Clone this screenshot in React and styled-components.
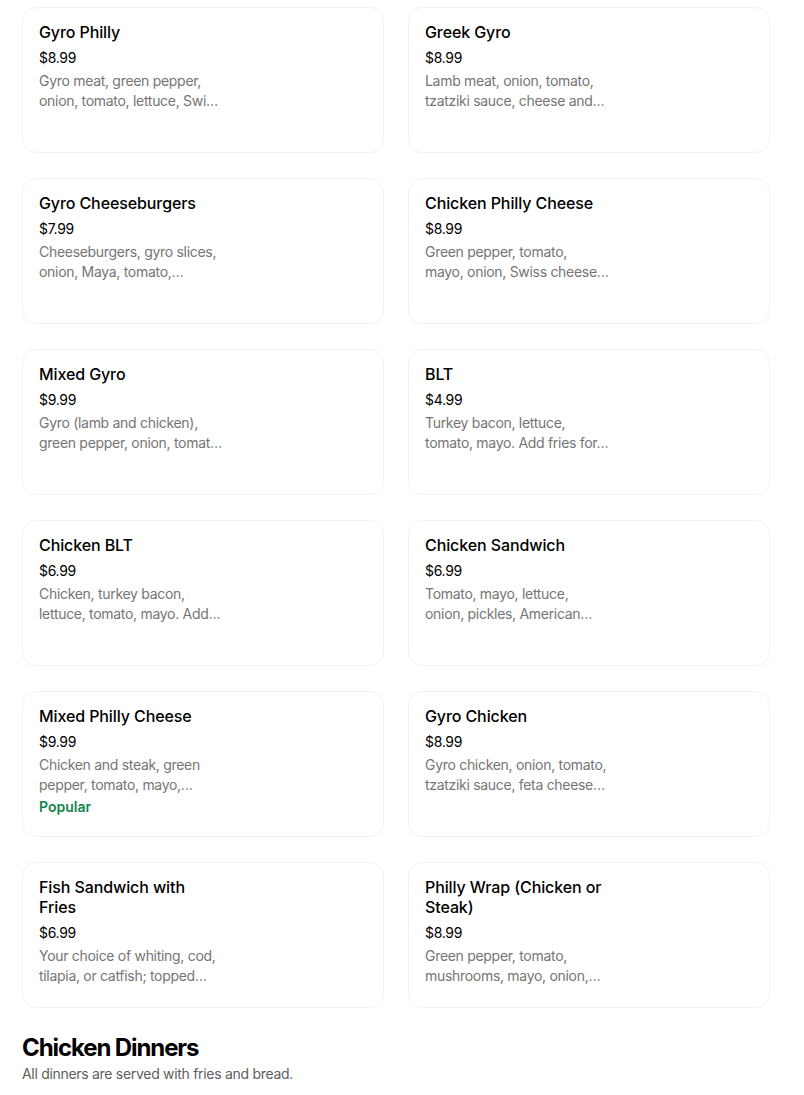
import React from "react";
import styled, { createGlobalStyle } from "styled-components";

const Global = createGlobalStyle`
  html, body { margin: 0; padding: 0; background: #fff; }
  body { font-family: Inter, "Noto Sans", Arial, sans-serif; color: #000; -webkit-font-smoothing: antialiased; }
`;

const Page = styled.div`
  padding: 7px 0 0 22px;
`;

const Grid = styled.div`
  display: grid;
  grid-template-columns: 362px 362px;
  column-gap: 24px;
  row-gap: 25px;
`;

const Card = styled.div`
  box-sizing: border-box;
  height: 146px;
  border: 1px solid #f2f2f2;
  border-radius: 14px;
  padding: 14px 16px 0 16px;
  background: #fff;
`;

const Info = styled.div`
  width: 184px;
  display: flex;
  flex-direction: column;
`;

const Title = styled.div`
  font-size: 16px;
  line-height: 20px;
  font-weight: 500;
  letter-spacing: -0.1px;
  color: #000;
`;

const Price = styled.div`
  margin-top: 6px;
  font-size: 14px;
  line-height: 20px;
  letter-spacing: -0.3px;
  color: #000;
`;

const Desc = styled.div`
  margin-top: 3px;
  font-size: 14px;
  line-height: 20px;
  letter-spacing: -0.3px;
  color: #757575;
  white-space: pre;
`;

const Badge = styled.div`
  margin-top: 2px;
  font-size: 14px;
  line-height: 20px;
  font-weight: 600;
  color: #16844a;
`;

const Section = styled.section`
  margin-top: 24px;
`;

const Heading = styled.h2`
  margin: 0;
  font-size: 24px;
  line-height: 32px;
  font-weight: 700;
  letter-spacing: -1.1px;
`;

const Sub = styled.p`
  margin: 0;
  font-size: 14px;
  line-height: 20px;
  color: #5e5e5e;
  letter-spacing: -0.3px;
`;

const items = [
  { t: "Gyro Philly", p: "$8.99", d: ["Gyro meat, green pepper,", "onion, tomato, lettuce, Swi…"] },
  { t: "Greek Gyro", p: "$8.99", d: ["Lamb meat, onion, tomato,", "tzatziki sauce, cheese and…"] },
  { t: "Gyro Cheeseburgers", p: "$7.99", d: ["Cheeseburgers, gyro slices,", "onion, Maya, tomato,…"] },
  { t: "Chicken Philly Cheese", p: "$8.99", d: ["Green pepper, tomato,", "mayo, onion, Swiss cheese…"] },
  { t: "Mixed Gyro", p: "$9.99", d: ["Gyro (lamb and chicken),", "green pepper, onion, tomat…"] },
  { t: "BLT", p: "$4.99", d: ["Turkey bacon, lettuce,", "tomato, mayo. Add fries for…"] },
  { t: "Chicken BLT", p: "$6.99", d: ["Chicken, turkey bacon,", "lettuce, tomato, mayo. Add…"] },
  { t: "Chicken Sandwich", p: "$6.99", d: ["Tomato, mayo, lettuce,", "onion, pickles, American…"] },
  { t: "Mixed Philly Cheese", p: "$9.99", d: ["Chicken and steak, green", "pepper, tomato, mayo,…"], popular: true },
  { t: "Gyro Chicken", p: "$8.99", d: ["Gyro chicken, onion, tomato,", "tzatziki sauce, feta cheese…"] },
  { t: "Fish Sandwich with Fries", p: "$6.99", d: ["Your choice of whiting, cod,", "tilapia, or catfish; topped…"] },
  { t: "Philly Wrap (Chicken or Steak)", p: "$8.99", d: ["Green pepper, tomato,", "mushrooms, mayo, onion,…"] },
];

export default function App() {
  return (
    <Page>
      <Global />
      <Grid>
        {items.map((it) => (
          <Card key={it.t}>
            <Info>
              <Title>{it.t}</Title>
              <Price>{it.p}</Price>
              <Desc>{it.d.join("\n")}</Desc>
              {it.popular && <Badge>Popular</Badge>}
            </Info>
          </Card>
        ))}
      </Grid>
      <Section>
        <Heading>Chicken Dinners</Heading>
        <Sub>All dinners are served with fries and bread.</Sub>
      </Section>
    </Page>
  );
}
